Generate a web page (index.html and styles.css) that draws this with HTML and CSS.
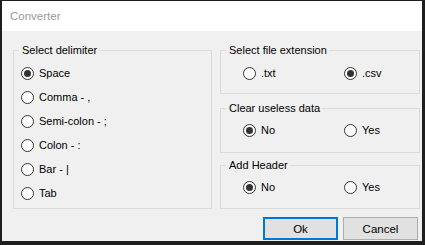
FILE: index.html
```html
<!DOCTYPE html>
<html>
<head>
<meta charset="utf-8">
<link rel="stylesheet" href="styles.css">
</head>
<body>
<div class="window">
  <div class="titlebar">Converter</div>
  <div class="client">
    <fieldset class="group delim">
      <legend>Select delimiter</legend>
      <div class="list">
        <label class="radio"><span class="dot checked"></span>Space</label>
        <label class="radio"><span class="dot"></span>Comma - ,</label>
        <label class="radio"><span class="dot"></span>Semi-colon - ;</label>
        <label class="radio"><span class="dot"></span>Colon - :</label>
        <label class="radio"><span class="dot"></span>Bar - |</label>
        <label class="radio"><span class="dot"></span>Tab</label>
      </div>
    </fieldset>
    <div class="right">
      <fieldset class="group g1">
        <legend>Select file extension</legend>
        <div class="pair">
          <label class="radio"><span class="dot"></span>.txt</label>
          <label class="radio"><span class="dot checked"></span>.csv</label>
        </div>
      </fieldset>
      <fieldset class="group g2">
        <legend>Clear useless data</legend>
        <div class="pair">
          <label class="radio"><span class="dot checked"></span>No</label>
          <label class="radio"><span class="dot"></span>Yes</label>
        </div>
      </fieldset>
      <fieldset class="group g3">
        <legend>Add Header</legend>
        <div class="pair">
          <label class="radio"><span class="dot checked"></span>No</label>
          <label class="radio"><span class="dot"></span>Yes</label>
        </div>
      </fieldset>
    </div>
    <div class="buttons">
      <button class="btn default">Ok</button>
      <button class="btn">Cancel</button>
    </div>
  </div>
</div>
</body>
</html>
```

FILE: styles.css
```css
html, body {
  margin: 0;
  width: 425px;
  height: 245px;
  overflow: hidden;
  background: #1e1e1e;
}
.window {
  box-sizing: border-box;
  width: 425px;
  height: 245px;
  border-style: solid;
  border-color: #1e1e1e;
  border-width: 1px 3px 4px 2px;
  display: flex;
  flex-direction: column;
  font-family: "Liberation Sans", Arial, sans-serif;
  font-size: 11px;
  color: #000;
}
.titlebar {
  flex: none;
  height: 30px;
  line-height: 30px;
  background: #fff;
  color: #999;
  padding-left: 8px;
  font-size: 11.5px;
}
.client {
  flex: 1;
  background: #f0f0f0;
  display: grid;
  grid-template-columns: 199px 200px;
  grid-template-rows: 166px auto;
  column-gap: 8px;
  align-content: start;
  padding: 12px 2px 0 11px;
}
.group {
  margin: 0;
  border: 1px solid #dcdcdc;
  padding: 0 4px 0 5px;
  min-width: 0;
  box-sizing: border-box;
}
.group legend {
  padding: 0 2px 0 3px;
  height: 15px;
  line-height: 15px;
}
.list {
  display: flex;
  flex-direction: column;
  padding: 3px 0 0 2px;
}
.radio {
  display: flex;
  align-items: center;
  height: 24px;
}
.dot {
  flex: none;
  box-sizing: border-box;
  width: 13px;
  height: 13px;
  border: 1px solid #333;
  border-radius: 50%;
  background: #fff;
  margin-right: 5px;
  display: flex;
  align-items: center;
  justify-content: center;
}
.dot.checked::after {
  content: "";
  width: 7px;
  height: 7px;
  border-radius: 50%;
  background: #333;
}
.right {
  display: flex;
  flex-direction: column;
}
.g1 { height: 51px; }
.g2 { height: 52px; margin-top: 7px; }
.g3 { height: 51px; margin-top: 5px; }
.pair {
  display: grid;
  grid-template-columns: 101px auto;
  padding: 3px 0 0 17px;
}
.g2 .pair, .g3 .pair { padding-top: 2px; }
.buttons {
  grid-column: 1 / -1;
  display: flex;
  justify-content: flex-end;
  gap: 5px;
  margin-top: 8px;
  padding-right: 2px;
}
.btn {
  box-sizing: border-box;
  width: 75px;
  height: 23px;
  padding: 0;
  font: inherit;
  font-size: 11.5px;
  color: #000;
  background: #e1e1e1;
  border: 1px solid #adadad;
}
.btn.default {
  border: 2px solid #0078d7;
}
```
